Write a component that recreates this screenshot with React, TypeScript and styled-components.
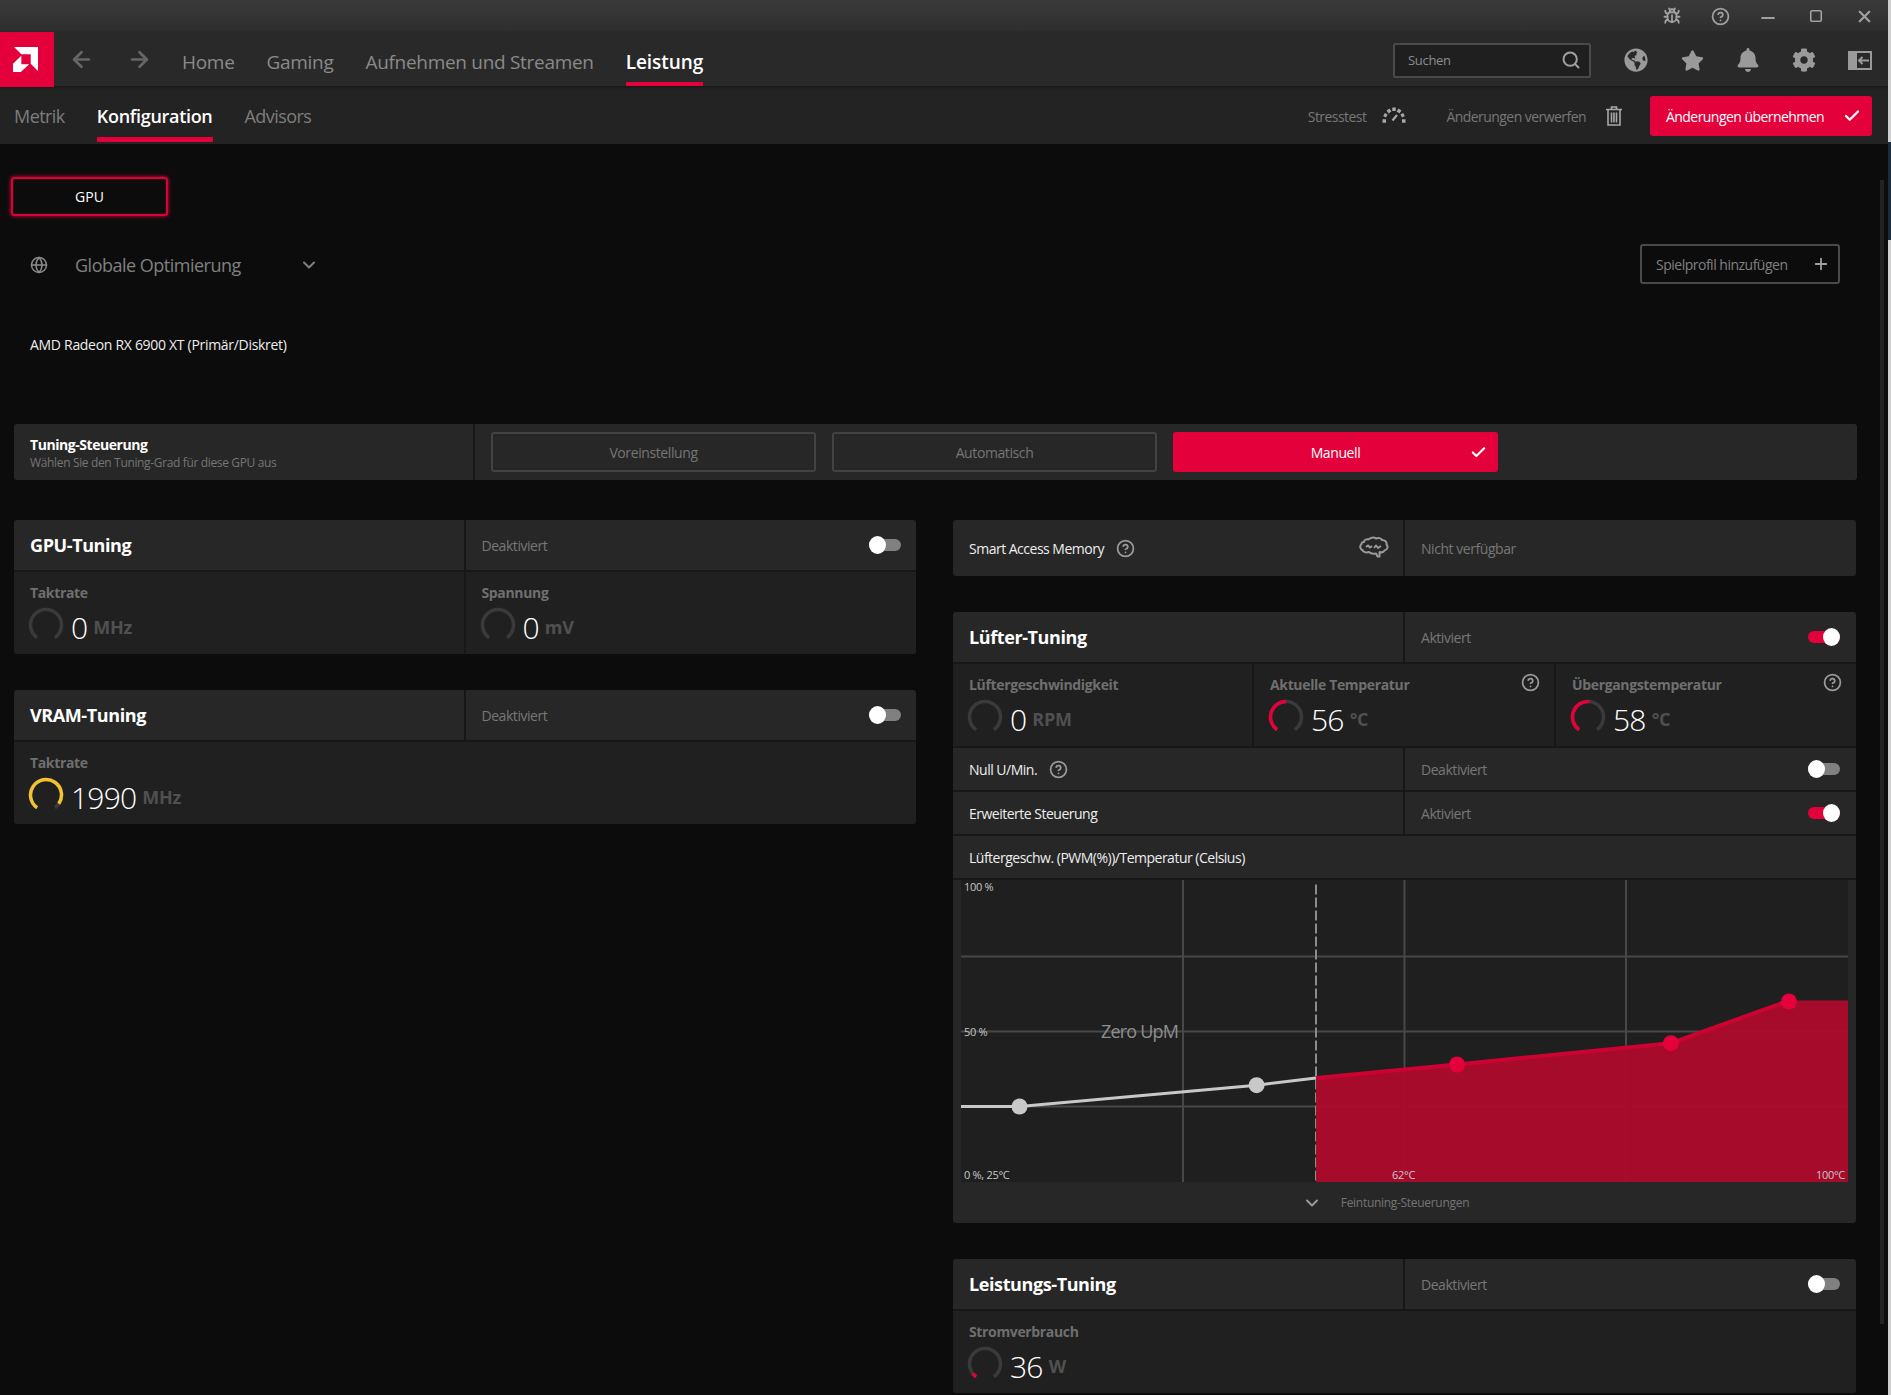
import React from 'react'
import styled, { createGlobalStyle } from 'styled-components'
import { ArrowLeft, ArrowRight, Bug, Check, ChevronDown, CircleHelp, Globe, Minus, Plus, Search, Square, X } from 'lucide-react'
import { FaBell, FaCog, FaGlobeAmericas, FaStar } from 'react-icons/fa'

const RED = '#e4003a'

const GlobalStyle = createGlobalStyle`
  html, body {
    margin: 0;
    padding: 0;
    background: linear-gradient(#cfcfcf 142px, #1c2c3c 142px, #1c2c3c 240px, #cfcfcf 240px);
  }
  body {
    font-family: "Open Sans", "Liberation Sans", sans-serif;
    overflow: hidden;
  }
`

const Window = styled.div`
  position: relative;
  width: 1888px;
  height: 1395px;
  overflow: hidden;
  background: #0c0c0c;
  display: flex;
  flex-direction: column;
`
const TitleBar = styled.div`
  height: 32px;
  flex: none;
  display: flex;
  justify-content: flex-end;
  align-items: center;
  background: linear-gradient(#3a3a3a, #2e2e2e);
  color: #a0a0a0;
`
const TitleButton = styled.div`
  width: 48px;
  display: flex;
  justify-content: center;
  align-items: center;
`
const NavBar = styled.div`
  height: 54px;
  flex: none;
  display: flex;
  align-items: stretch;
  background: #292929;
  box-shadow: 0 1px 2px #151515;
  z-index: 1;
`
const Logo = styled.div`
  width: 54px;
  height: 55px;
  box-sizing: border-box;
  padding-right: 3px;
  flex: none;
  background: ${RED};
  display: flex;
  align-items: center;
  justify-content: center;
`
const ArrowButton = styled.div`
  width: 58px;
  flex: none;
  display: flex;
  align-items: center;
  justify-content: center;
  color: #666;
  margin-left: ${p => p.$first ? '-2px' : '0'};
`
const NavTabs = styled.div`
  display: flex;
  gap: 32px;
  margin-left: 14px;
`
const NavTab = styled.div`
  padding-top: 9px;
  box-sizing: border-box;
  height: 54px;
  display: flex;
  align-items: center;
  font-size: 19px;
  letter-spacing: ${p => p.$active ? '-0.05px' : '-0.3px'};
  color: ${p => p.$active ? '#fff' : '#8a8a8a'};
  font-weight: ${p => p.$active ? 600 : 400};
  border-bottom: 4px solid ${p => p.$active ? RED : 'transparent'};
`
const SearchBox = styled.div`
  width: 198px;
  height: 35px;
  box-sizing: border-box;
  align-self: center;
  margin: 2px 17px 0 auto;
  padding: 0 8px 0 13px;
  border: 2px solid #4a4a4a;
  border-radius: 2px;
  background: #1f1f1f;
  display: flex;
  align-items: center;
  justify-content: space-between;
  font-size: 13px;
  letter-spacing: -0.3px;
  color: #8c8c8c;
`
const NavIcon = styled.div`
  width: 56px;
  flex: none;
  padding-top: 2px;
  display: flex;
  align-items: center;
  justify-content: center;
  color: #9a9a9a;
`
const SubBar = styled.div`
  height: 58px;
  flex: none;
  display: flex;
  align-items: stretch;
  padding: 0 16px 0 14px;
  background: #232323;
`
const SubTabs = styled.div`
  display: flex;
  gap: 32px;
`
const SubTab = styled.div`
  display: flex;
  align-items: center;
  box-sizing: border-box;
  padding-top: 8px;
  font-size: 18px;
  letter-spacing: ${p => p.$active ? '-0.3px' : '-0.55px'};
  color: ${p => p.$active ? '#fff' : '#7d7d7d'};
  font-weight: ${p => p.$active ? 600 : 400};
  border-bottom: 5px solid ${p => p.$active ? RED : 'transparent'};
  margin-bottom: 2px;
`
const SubActions = styled.div`
  margin-left: auto;
  padding-top: 2px;
  display: flex;
  align-items: center;
`
const ActionText = styled.span`
  font-size: 14px;
  letter-spacing: -0.55px;
  color: #777;
`
const ActionIcon = styled.div`
  display: flex;
  color: #a8a8a8;
  margin: ${p => p.$margin};
`
const ApplyButton = styled.div`
  width: 222px;
  height: 40px;
  box-sizing: border-box;
  padding: 0 11px 0 16px;
  border-radius: 3px;
  background: ${RED};
  color: #fff;
  font-size: 14px;
  letter-spacing: -0.55px;
  display: flex;
  align-items: center;
  justify-content: space-between;
`
const Content = styled.div`
  flex: 1;
  padding: 33px 31px 0 14px;
  display: flex;
  flex-direction: column;
`
const GpuButton = styled.div`
  width: 157px;
  height: 39px;
  margin-left: -3px;
  box-sizing: border-box;
  border: 2px solid #d4043a;
  border-radius: 3px;
  box-shadow: 0 0 4px ${RED}, inset 0 0 2px #7a0a25;
  color: #fff;
  font-size: 14px;
  display: flex;
  align-items: center;
  justify-content: center;
`
const ProfileRow = styled.div`
  margin-top: 28px;
  height: 40px;
  display: flex;
  align-items: center;
  padding: 0 17px 0 16px;
`
const ProfileSelect = styled.div`
  display: flex;
  align-items: center;
  padding-top: 2px;
  color: #808080;
  font-size: 18px;
  letter-spacing: -0.5px;
`
const ProfileName = styled.span`
  margin: 0 58px 0 27px;
`
const AddProfile = styled.div`
  margin-left: auto;
  width: 200px;
  height: 40px;
  box-sizing: border-box;
  padding: 0 8px 0 14px;
  border: 2px solid #4a4a4a;
  border-radius: 3px;
  display: flex;
  align-items: center;
  justify-content: space-between;
  font-size: 14px;
  letter-spacing: -0.5px;
  color: #808080;
`
const ModelName = styled.div`
  margin: 51px 0 0 16px;
  height: 20px;
  line-height: 20px;
  font-size: 14px;
  letter-spacing: -0.3px;
  color: #eee;
`
const TuningBar = styled.div`
  margin-top: 69px;
  height: 56px;
  display: grid;
  grid-template-columns: 459px 1fr;
  column-gap: 2px;
  background: #191919;
  border-radius: 3px;
  overflow: hidden;
`
const TuningInfo = styled.div`
  background: #272727;
  padding: 11px 16px 0;
  display: flex;
  flex-direction: column;
`
const TuningTitle = styled.div`
  font-size: 14px;
  line-height: 19px;
  letter-spacing: -0.45px;
  font-weight: 700;
  color: #fff;
`
const TuningHint = styled.div`
  font-size: 12px;
  line-height: 18px;
  letter-spacing: -0.35px;
  color: #757575;
`
const TuningModes = styled.div`
  background: #272727;
  padding: 8px 16px;
  display: flex;
  gap: 16px;
`
const ModeButton = styled.div`
  position: relative;
  width: 325px;
  box-sizing: border-box;
  border: 2px solid ${p => p.$active ? RED : '#434343'};
  border-radius: 3px;
  background: ${p => p.$active ? RED : 'transparent'};
  color: ${p => p.$active ? '#fff' : '#757575'};
  font-size: 14px;
  letter-spacing: -0.4px;
  display: flex;
  align-items: center;
  justify-content: center;
`
const ModeCheck = styled.div`
  position: absolute;
  right: 9px;
  top: 10px;
  display: flex;
`
const Columns = styled.div`
  margin-top: 40px;
  display: grid;
  grid-template-columns: 902px 903px;
  column-gap: 37px;
  align-items: start;
`
const Column = styled.div`
  display: flex;
  flex-direction: column;
  gap: 36px;
`
const Panel = styled.div`
  display: flex;
  flex-direction: column;
  gap: 2px;
  background: #171717;
  border-radius: 3px;
  overflow: hidden;
`
const SplitRow = styled.div`
  display: grid;
  grid-template-columns: ${p => p.$single ? '1fr' : '450fr 451fr'};
  column-gap: 2px;
  height: ${p => p.$height}px;
`
const ThreeRow = styled.div`
  display: grid;
  grid-template-columns: 299px 1fr 1fr;
  column-gap: 2px;
  height: 82px;
`
const Cell = styled.div`
  position: relative;
  background: #272727;
  display: flex;
  align-items: center;
  padding: 0 15px 0 16px;
  color: #777;
  font-size: 14px;
  letter-spacing: -0.45px;
`
const RightColumn = styled(Column)`
  ${Cell} {
    padding-right: 16px;
  }
`
const PanelTitle = styled.div`
  font-size: 18px;
  font-weight: 700;
  letter-spacing: -0.4px;
  color: #fff;
`
const RowLabel = styled.div`
  font-size: 14px;
  letter-spacing: -0.5px;
  color: #eee;
  display: flex;
  align-items: center;
  gap: 12px;
`
const HelpMark = styled.div`
  display: flex;
  color: #9a9a9a;
`
const CornerHelp = styled(HelpMark)`
  position: absolute;
  top: 9px;
  right: 14px;
`
const BrainMark = styled.div`
  margin-left: auto;
  display: flex;
  color: #9a9a9a;
  margin-right: -2px;
`
const ToggleTrack = styled.div`
  position: relative;
  margin-left: auto;
  width: 32px;
  height: 12px;
  border-radius: 6px;
  background: ${p => p.$on ? RED : '#808080'};
`
const ToggleThumb = styled.div`
  position: absolute;
  top: -3px;
  width: 17px;
  height: 18px;
  border-radius: 50%;
  background: #fff;
  left: ${p => p.$on ? '15px' : '0'};
`
const MetricCell = styled.div`
  position: relative;
  background: #202020;
  padding: 11px 14px 0 16px;
  display: flex;
  flex-direction: column;
`
const MetricLabel = styled.div`
  font-size: 14px;
  line-height: 20px;
  font-weight: 700;
  letter-spacing: -0.35px;
  color: #6f6f6f;
`
const MetricValueRow = styled.div`
  margin: 4px 0 0 -2px;
  display: flex;
  align-items: flex-start;
`
const MetricValue = styled.span`
  margin: 3px 0 0 7px;
  font-size: 30px;
  line-height: 36px;
  font-weight: 300;
  letter-spacing: -0.8px;
  color: #fff;
`
const MetricUnit = styled.span`
  margin: 7px 0 0 6px;
  font-size: 18px;
  line-height: 26px;
  font-weight: 700;
  letter-spacing: -0.3px;
  color: #505050;
`
const ChartArea = styled.div`
  background: #272727;
  padding: 0 8px;
  display: flex;
`
const Chart = styled.div`
  position: relative;
  width: 887px;
  height: 302px;
  background: #1f1f1f;
`
const ChartLabel = styled.span`
  position: absolute;
  font-size: 11px;
  line-height: 14px;
  letter-spacing: -0.3px;
  color: #c8c8c8;
  white-space: nowrap;
`
const ZeroLabel = styled.span`
  position: absolute;
  left: 140px;
  top: 138px;
  font-size: 18px;
  line-height: 26px;
  letter-spacing: -0.8px;
  color: #8e8e8e;
`
const ChartFooter = styled.div`
  height: 41px;
  background: #272727;
  margin-top: -2px;
  display: flex;
  align-items: center;
  justify-content: center;
  gap: 19px;
  padding-right: 38px;
  color: #757575;
  font-size: 12px;
  letter-spacing: -0.3px;
`
const Scrollbar = styled.div`
  position: absolute;
  right: 4px;
  top: 180px;
  height: 1144px;
  width: 4px;
  background: #222;
`

const polar = (deg: number) => {
  const a = (deg - 90) * Math.PI / 180
  return `${18 + 15.5 * Math.cos(a)} ${18 + 15.5 * Math.sin(a)}`
}
const arc = (from: number, to: number) =>
  `M${polar(from)} A15.5 15.5 0 ${to - from > 180 ? 1 : 0} 1 ${polar(to)}`

const Dial = ({ share, color }: { share: number; color: string }) => (
  <svg width="36" height="34" viewBox="0 0 36 34">
    <path d={arc(-145, 145)} fill="none" stroke="#3a3a3a" strokeWidth="3.5" />
    {share > 0 && <path d={arc(-145, -145 + 290 * share)} fill="none" stroke={color} strokeWidth="3.5" />}
  </svg>
)

const Metric = ({ label, value, unit, share = 0, color = RED }: { label: string; value: string; unit: string; share?: number; color?: string }) => (
  <>
    <MetricLabel>{label}</MetricLabel>
    <MetricValueRow>
      <Dial share={share} color={color} />
      <MetricValue>{value}</MetricValue>
      <MetricUnit>{unit}</MetricUnit>
    </MetricValueRow>
  </>
)

const Toggle = ({ on = false }: { on?: boolean }) => (
  <ToggleTrack $on={on}>
    <ToggleThumb $on={on} />
  </ToggleTrack>
)

const Help = () => <CircleHelp size={19} strokeWidth={2.2} />

const AmdLogo = () => (
  <svg width="25" height="25" viewBox="0 0 24 24" fill="#fff">
    <polygon points="1,0 24,0 24,23 17,16 17,7 8,7" />
    <polygon points="8,8.5 0,16 0,24 7.5,24 15.5,16.5 8,16.5" />
  </svg>
)

const PanelIcon = () => (
  <svg width="24" height="19" viewBox="0 0 24 19">
    <path fill="currentColor" fillRule="evenodd" d="M0 0H24V19H0ZM9 2V17H22V2Z" />
    <path d="M21 9.500H11M14.500 6L11 9.500L14.500 13" fill="none" stroke="currentColor" strokeWidth="2" />
  </svg>
)

const GaugeIcon = () => (
  <svg width="26" height="18" viewBox="0 0 26 18" fill="none" stroke="currentColor" strokeWidth="3.5">
    <path d="M1.500 16H5M3 9.500L5.800 11M7 4.500L9 7.500M13 2.500V6M19 4.500L17 7.500M23 9.500L20.200 11M21 16H24.500" />
    <path d="M11.500 15.500L16 10" strokeWidth="2.2" />
  </svg>
)

const TrashIcon = () => (
  <svg width="16" height="20" viewBox="0 0 16 20" fill="none" stroke="currentColor" strokeWidth="1.6">
    <path d="M0 3.500H16M5.500 3V1H10.500V3" />
    <path d="M2 4V19H14V4" />
    <path d="M5.500 6.500V16.500M8 6.500V16.500M10.500 6.500V16.500" />
  </svg>
)

const BrainIcon = () => (
  <svg width="30" height="24" viewBox="0 0 30 24" fill="none" stroke="currentColor" strokeWidth="2" strokeLinejoin="round">
    <path d="M5 6C5 3.500 8 3 9.500 3.500C11 1.500 15 1 17 2.500C19 1.500 22 2 23 4C26 4 28 6 27.500 8.500C29.500 10.500 28.500 14 25.500 14.500C24.500 16.500 22 16.500 20.500 16V20.500H18.500L17 17.500C14 18 11.500 17.500 10 16C7 17 4 16 3.500 14C1 13.500 0.500 9.500 2.500 8C2.500 7 3.500 6 5 6Z" />
    <path d="M7 11L9 9.500L11 11.500L13 10M15 12L17 9.500L19 12L22 10" />
  </svg>
)

const FanCurve = () => (
  <svg width="887" height="302" viewBox="0 -1.5 887 302">
    <g stroke="#484848" strokeWidth="2">
      <path d="M0 75H887M0 150H887M0 225H887M222 -2V301M443.500 -2V301M665 -2V301" />
    </g>
    <path d="M355 3V300" stroke="#8c8c8c" strokeWidth="2" strokeDasharray="10 3" />
    <polygon points="355,196.500 496,183 710,161.700 828,119 887,119 887,300.500 355,300.500" fill="#ad0a2d" fillOpacity="0.96" />
    <path d="M0 225H58.500L295.600 203.700L355 196.500" fill="none" stroke="#c8c8c8" strokeWidth="3" />
    <path d="M355 196.500L496 183L710 161.700L828 119" fill="none" stroke="#cc0233" strokeWidth="4" />
    <circle cx="58.500" cy="225" r="8" fill="#c8c8c8" />
    <circle cx="295.600" cy="203.700" r="8" fill="#c8c8c8" />
    <circle cx="496" cy="183" r="8" fill={RED} />
    <circle cx="710" cy="161.700" r="8" fill={RED} />
    <circle cx="828" cy="120" r="8" fill={RED} />
  </svg>
)

const App = () => {
  return (
    <Window>
      <GlobalStyle />
      <TitleBar>
        <TitleButton><Bug size={18} strokeWidth={2.4} /></TitleButton>
        <TitleButton><CircleHelp size={19} strokeWidth={2.2} /></TitleButton>
        <TitleButton><Minus size={20} strokeWidth={2.6} style={{ marginTop: 4 }} /></TitleButton>
        <TitleButton><Square size={14} strokeWidth={2.8} /></TitleButton>
        <TitleButton><X size={19} strokeWidth={2.8} /></TitleButton>
      </TitleBar>
      <NavBar>
        <Logo><AmdLogo /></Logo>
        <ArrowButton $first><ArrowLeft size={25} strokeWidth={2.6} /></ArrowButton>
        <ArrowButton><ArrowRight size={25} strokeWidth={2.6} /></ArrowButton>
        <NavTabs>
          <NavTab>Home</NavTab>
          <NavTab>Gaming</NavTab>
          <NavTab>Aufnehmen und Streamen</NavTab>
          <NavTab $active>Leistung</NavTab>
        </NavTabs>
        <SearchBox>
          Suchen
          <Search size={20} strokeWidth={2.4} color="#a0a0a0" />
        </SearchBox>
        <NavIcon><FaGlobeAmericas size={24} /></NavIcon>
        <NavIcon><FaStar size={23} /></NavIcon>
        <NavIcon><FaBell size={24} /></NavIcon>
        <NavIcon><FaCog size={24} /></NavIcon>
        <NavIcon><PanelIcon /></NavIcon>
      </NavBar>
      <SubBar>
        <SubTabs>
          <SubTab>Metrik</SubTab>
          <SubTab $active>Konfiguration</SubTab>
          <SubTab>Advisors</SubTab>
        </SubTabs>
        <SubActions>
          <ActionText>Stresstest</ActionText>
          <ActionIcon $margin="0 39px 4px 15px"><GaugeIcon /></ActionIcon>
          <ActionText>Änderungen verwerfen</ActionText>
          <ActionIcon $margin="0 28px 0 20px"><TrashIcon /></ActionIcon>
          <ApplyButton>
            Änderungen übernehmen
            <Check size={18} strokeWidth={3} />
          </ApplyButton>
        </SubActions>
      </SubBar>
      <Content>
        <GpuButton>GPU</GpuButton>
        <ProfileRow>
          <ProfileSelect>
            <Globe size={18} color="#8a8a8a" />
            <ProfileName>Globale Optimierung</ProfileName>
            <ChevronDown size={20} strokeWidth={2.4} />
          </ProfileSelect>
          <AddProfile>
            Spielprofil hinzufügen
            <Plus size={18} strokeWidth={2.4} color="#a0a0a0" />
          </AddProfile>
        </ProfileRow>
        <ModelName>AMD Radeon RX 6900 XT (Primär/Diskret)</ModelName>
        <TuningBar>
          <TuningInfo>
            <TuningTitle>Tuning-Steuerung</TuningTitle>
            <TuningHint>Wählen Sie den Tuning-Grad für diese GPU aus</TuningHint>
          </TuningInfo>
          <TuningModes>
            <ModeButton>Voreinstellung</ModeButton>
            <ModeButton>Automatisch</ModeButton>
            <ModeButton $active>
              Manuell
              <ModeCheck><Check size={17} strokeWidth={3} /></ModeCheck>
            </ModeButton>
          </TuningModes>
        </TuningBar>
        <Columns>
          <Column>
            <Panel>
              <SplitRow $height={50}>
                <Cell><PanelTitle>GPU-Tuning</PanelTitle></Cell>
                <Cell>Deaktiviert<Toggle /></Cell>
              </SplitRow>
              <SplitRow $height={82}>
                <MetricCell><Metric label="Taktrate" value="0" unit="MHz" /></MetricCell>
                <MetricCell><Metric label="Spannung" value="0" unit="mV" /></MetricCell>
              </SplitRow>
            </Panel>
            <Panel>
              <SplitRow $height={50}>
                <Cell><PanelTitle>VRAM-Tuning</PanelTitle></Cell>
                <Cell>Deaktiviert<Toggle /></Cell>
              </SplitRow>
              <SplitRow $height={82} $single>
                <MetricCell><Metric label="Taktrate" value="1990" unit="MHz" share={0.93} color="#f2c230" /></MetricCell>
              </SplitRow>
            </Panel>
          </Column>
          <RightColumn>
            <Panel>
              <SplitRow $height={56}>
                <Cell>
                  <RowLabel>Smart Access Memory <HelpMark><Help /></HelpMark></RowLabel>
                  <BrainMark><BrainIcon /></BrainMark>
                </Cell>
                <Cell>Nicht verfügbar</Cell>
              </SplitRow>
            </Panel>
            <Panel>
              <SplitRow $height={50}>
                <Cell><PanelTitle>Lüfter-Tuning</PanelTitle></Cell>
                <Cell>Aktiviert<Toggle on /></Cell>
              </SplitRow>
              <ThreeRow>
                <MetricCell><Metric label="Lüftergeschwindigkeit" value="0" unit="RPM" /></MetricCell>
                <MetricCell>
                  <Metric label="Aktuelle Temperatur" value="56" unit="°C" share={0.5} />
                  <CornerHelp><Help /></CornerHelp>
                </MetricCell>
                <MetricCell>
                  <Metric label="Übergangstemperatur" value="58" unit="°C" share={0.52} />
                  <CornerHelp><Help /></CornerHelp>
                </MetricCell>
              </ThreeRow>
              <SplitRow $height={42}>
                <Cell><RowLabel>Null U/Min. <HelpMark><Help /></HelpMark></RowLabel></Cell>
                <Cell>Deaktiviert<Toggle /></Cell>
              </SplitRow>
              <SplitRow $height={42}>
                <Cell><RowLabel>Erweiterte Steuerung</RowLabel></Cell>
                <Cell>Aktiviert<Toggle on /></Cell>
              </SplitRow>
              <SplitRow $height={42} $single>
                <Cell><RowLabel>Lüftergeschw. (PWM(%))/Temperatur (Celsius)</RowLabel></Cell>
              </SplitRow>
              <ChartArea>
                <Chart>
                  <FanCurve />
                  <ChartLabel style={{ left: 3, top: 0 }}>100 %</ChartLabel>
                  <ChartLabel style={{ left: 3, top: 145 }}>50 %</ChartLabel>
                  <ChartLabel style={{ left: 3, top: 288 }}>0 %, 25°C</ChartLabel>
                  <ChartLabel style={{ left: 431, top: 288 }}>62°C</ChartLabel>
                  <ChartLabel style={{ right: 3, top: 288 }}>100°C</ChartLabel>
                  <ZeroLabel>Zero UpM</ZeroLabel>
                </Chart>
              </ChartArea>
              <ChartFooter>
                <ChevronDown size={20} strokeWidth={2.4} color="#9a9a9a" />
                Feintuning-Steuerungen
              </ChartFooter>
            </Panel>
            <Panel>
              <SplitRow $height={50}>
                <Cell><PanelTitle>Leistungs-Tuning</PanelTitle></Cell>
                <Cell>Deaktiviert<Toggle /></Cell>
              </SplitRow>
              <SplitRow $height={82} $single>
                <MetricCell><Metric label="Stromverbrauch" value="36" unit="W" share={0.06} /></MetricCell>
              </SplitRow>
            </Panel>
          </RightColumn>
        </Columns>
      </Content>
      <Scrollbar />
    </Window>
  )
}

export default App
